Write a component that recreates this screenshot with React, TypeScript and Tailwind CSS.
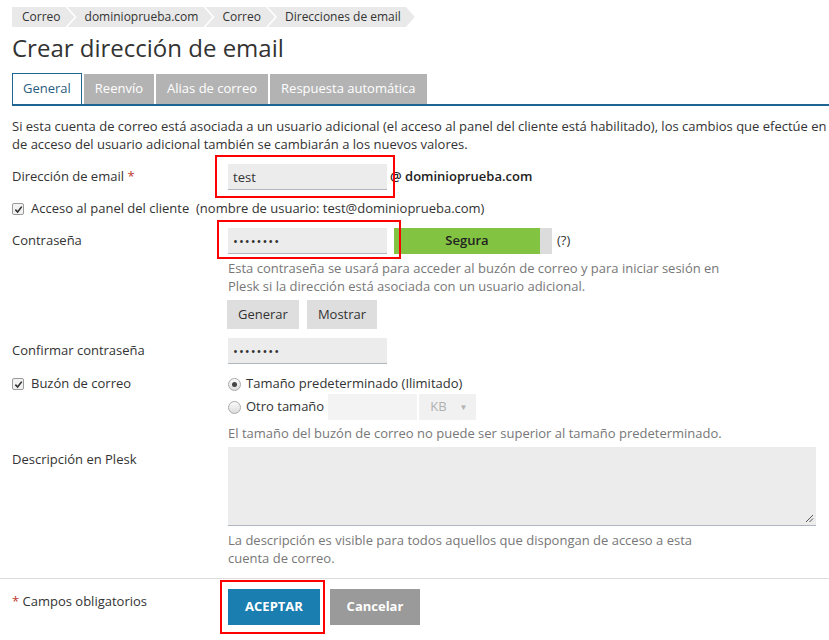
import React from 'react';

const crumbs = ['Correo', 'dominioprueba.com', 'Correo', 'Direcciones de email'];

function CheckBox() {
  return (
    <span className="inline-flex h-[12px] w-[12px] items-center justify-center rounded-[2px] border border-[#9a9a9a] bg-[#f2f2f2]">
      <svg width="9" height="9" viewBox="0 0 10 10">
        <path d="M1.5 5.2 L4 7.8 L8.6 1.8" fill="none" stroke="#333" strokeWidth="1.8" />
      </svg>
    </span>
  );
}

function Radio({ on }: { on?: boolean }) {
  return (
    <span className="inline-flex h-[13px] w-[13px] items-center justify-center rounded-full border border-[#aaa] bg-gradient-to-b from-[#fafafa] to-[#dcdcdc]">
      {on ? <span className="h-[5px] w-[5px] rounded-full bg-[#444]" /> : null}
    </span>
  );
}

const inputCls = 'h-[26px] w-[159px] bg-[#ececec] border-b border-[#aeb6bf] px-[5px] text-[13px] leading-[26px] text-[#333]';

export default function App() {
  return (
    <div className="relative min-h-[640px] w-[829px] overflow-hidden bg-white text-[13px] text-[#333] font-['Open_Sans',sans-serif]">
      <div className="pl-[12px] pt-[7px]">
        {/* breadcrumbs */}
        <div className="flex h-[20px] text-[12px]">
          {crumbs.map((c, i) => (
            <div
              key={i}
              className={`flex h-[20px] items-center bg-[#e9e9e9] pr-[14px] leading-[20px] ${
                i === 0
                  ? 'pl-[10px] [clip-path:polygon(0_0,calc(100%_-_9px)_0,100%_50%,calc(100%_-_9px)_100%,0_100%)]'
                  : '-ml-[7px] pl-[17px] [clip-path:polygon(0_0,calc(100%_-_9px)_0,100%_50%,calc(100%_-_9px)_100%,0_100%,9px_50%)]'
              }`}
            >
              {c}
            </div>
          ))}
        </div>

        <h1 className="mt-[5px] text-[24px] leading-[32px] text-[#333]">Crear dirección de email</h1>

        {/* tabs */}
        <div className="mt-[11px] flex h-[31px] items-end gap-[2px] border-b-2 border-[#1f6592]">
          <div className="flex h-[31px] items-center border border-b-0 border-[#1f6592] bg-white px-[10px] text-[#2b5d80]">General</div>
          <div className="flex h-[30px] items-center bg-[#b3b3b3] px-[11px] text-white">Reenvío</div>
          <div className="flex h-[30px] items-center bg-[#b3b3b3] px-[11px] text-white">Alias de correo</div>
          <div className="flex h-[30px] items-center bg-[#b3b3b3] px-[11px] text-white">Respuesta automática</div>
        </div>

        <p className="mt-[11px] whitespace-nowrap leading-[18px]">
          Si esta cuenta de correo está asociada a un usuario adicional (el acceso al panel del cliente está habilitado), los cambios que efectúe en
          <br />
          de acceso del usuario adicional también se cambiarán a los nuevos valores.
        </p>

        <div className="mt-[11px] flex flex-col">
          <div className="flex items-center">
            <div className="w-[216px] shrink-0">
              Dirección de email <span className="text-[#c0392b]">*</span>
            </div>
            <div className={inputCls}>test</div>
            <span className="ml-[3px] font-semibold text-[#222]">@ dominioprueba.com</span>
          </div>

          <div className="mt-[9px] flex h-[20px] items-center gap-[7px]">
            <CheckBox />
            <span>Acceso al panel del cliente&nbsp; (nombre de usuario: test@dominioprueba.com)</span>
          </div>

          <div className="mt-[9px] flex items-center">
            <div className="w-[216px] shrink-0">Contraseña</div>
            <div className={`${inputCls} tracking-[1px]`}>••••••••</div>
            <div className="ml-[7px] flex h-[26px] w-[158px] bg-[#dcdcdc]">
              <div className="flex h-full w-[146px] items-center justify-center bg-[#82c341] font-semibold text-[#222]">Segura</div>
            </div>
            <span className="ml-[5px]">(?)</span>
          </div>

          <div className="ml-[216px] mt-[5px] leading-[18px] text-[#777]">
            Esta contraseña se usará para acceder al buzón de correo y para iniciar sesión en
            <br />
            Plesk si la dirección está asociada con un usuario adicional.
          </div>

          <div className="ml-[215px] mt-[5px] flex gap-[8px]">
            <div className="flex h-[29px] items-center bg-[#dedede] px-[11px]">Generar</div>
            <div className="flex h-[29px] items-center bg-[#dedede] px-[11px]">Mostrar</div>
          </div>

          <div className="mt-[9px] flex items-center">
            <div className="w-[216px] shrink-0">Confirmar contraseña</div>
            <div className={`${inputCls} tracking-[1px] text-[11px]`}>••••••••</div>
          </div>

          <div className="mt-[10px] flex">
            <div className="flex h-[20px] w-[216px] shrink-0 items-center gap-[7px]">
              <CheckBox />
              <span>Buzón de correo</span>
            </div>
            <div className="flex flex-col">
              <div className="flex h-[20px] items-center gap-[5px]">
                <Radio on />
                <span>Tamaño predeterminado (Ilimitado)</span>
              </div>
              <div className="flex h-[26px] items-center">
                <Radio />
                <span className="ml-[5px] mr-[4px]">Otro tamaño</span>
                <div className="h-[26px] w-[89px] bg-[#f3f3f3]" />
                <div className="ml-[2px] flex h-[26px] w-[57px] items-center bg-[#f1f1f1] pl-[11px] text-[#b0b0b0]">
                  KB
                  <span className="ml-[13px] text-[8px]">▼</span>
                </div>
              </div>
            </div>
          </div>

          <div className="ml-[216px] mt-[4px] leading-[18px] text-[#777]">
            El tamaño del buzón de correo no puede ser superior al tamaño predeterminado.
          </div>

          <div className="mt-[5px] flex">
            <div className="w-[216px] shrink-0 pt-[3px]">Descripción en Plesk</div>
            <div className="relative h-[79px] w-[588px] border-b border-[#aeb6bf] bg-[#ececec]">
              <svg className="absolute bottom-[2px] right-[2px]" width="9" height="9" viewBox="0 0 9 9">
                <path d="M1 8 L8 1 M4.5 8 L8 4.5" stroke="#555" strokeWidth="1" />
              </svg>
            </div>
          </div>

          <div className="ml-[216px] mt-[5px] leading-[18px] text-[#777]">
            La descripción es visible para todos aquellos que dispongan de acceso a esta
            <br />
            cuenta de correo.
          </div>
        </div>
      </div>

      <div className="mt-[11px] border-t border-[#dddddd]" />

      <div className="flex pl-[12px] pt-[10px]">
        <div className="w-[216px] shrink-0 pt-[3px]">
          <span className="text-[#c0392b]">*</span> Campos obligatorios
        </div>
        <div className="flex gap-[10px]">
          <div className="flex h-[36px] w-[92px] items-center justify-center bg-[#1a7eb0] font-bold text-white">ACEPTAR</div>
          <div className="flex h-[36px] w-[90px] items-center justify-center bg-[#9a9a9a] font-bold text-white">Cancelar</div>
        </div>
      </div>

      {/* red annotation boxes */}
      <div className="pointer-events-none absolute left-[215px] top-[155px] h-[43px] w-[180px] border-2 border-[#ff0000]" />
      <div className="pointer-events-none absolute left-[217px] top-[220px] h-[39px] w-[184px] border-2 border-[#ff0000]" />
      <div className="pointer-events-none absolute left-[220px] top-[580px] h-[54px] w-[105px] border-2 border-[#ff0000]" />
    </div>
  );
}
